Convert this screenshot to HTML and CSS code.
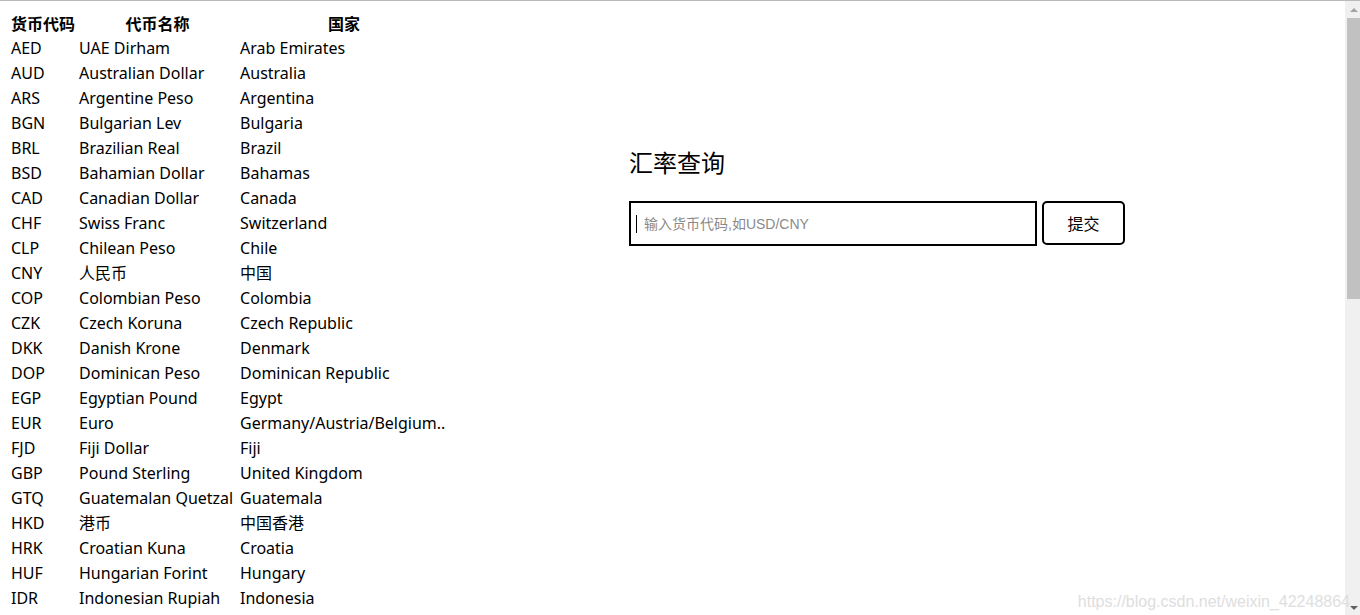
FILE: index.html
```html
<!DOCTYPE html>
<html lang="zh-CN">
<head>
<meta charset="utf-8">
<title>汇率查询</title>
<link rel="stylesheet" href="styles.css">
</head>
<body>
<div class="frame">
  <div class="page">
    <div class="list">
      <table class="rates">
        <thead>
          <tr><th class="c1">货币代码</th><th class="c2">代币名称</th><th class="c3">国家</th></tr>
        </thead>
        <tbody>
          <tr><td>AED</td><td>UAE Dirham</td><td>Arab Emirates</td></tr>
          <tr><td>AUD</td><td>Australian Dollar</td><td>Australia</td></tr>
          <tr><td>ARS</td><td>Argentine Peso</td><td>Argentina</td></tr>
          <tr><td>BGN</td><td>Bulgarian Lev</td><td>Bulgaria</td></tr>
          <tr><td>BRL</td><td>Brazilian Real</td><td>Brazil</td></tr>
          <tr><td>BSD</td><td>Bahamian Dollar</td><td>Bahamas</td></tr>
          <tr><td>CAD</td><td>Canadian Dollar</td><td>Canada</td></tr>
          <tr><td>CHF</td><td>Swiss Franc</td><td>Switzerland</td></tr>
          <tr><td>CLP</td><td>Chilean Peso</td><td>Chile</td></tr>
          <tr><td>CNY</td><td>人民币</td><td>中国</td></tr>
          <tr><td>COP</td><td>Colombian Peso</td><td>Colombia</td></tr>
          <tr><td>CZK</td><td>Czech Koruna</td><td>Czech Republic</td></tr>
          <tr><td>DKK</td><td>Danish Krone</td><td>Denmark</td></tr>
          <tr><td>DOP</td><td>Dominican Peso</td><td>Dominican Republic</td></tr>
          <tr><td>EGP</td><td>Egyptian Pound</td><td>Egypt</td></tr>
          <tr><td>EUR</td><td>Euro</td><td>Germany/Austria/Belgium..</td></tr>
          <tr><td>FJD</td><td>Fiji Dollar</td><td>Fiji</td></tr>
          <tr><td>GBP</td><td>Pound Sterling</td><td>United Kingdom</td></tr>
          <tr><td>GTQ</td><td>Guatemalan Quetzal</td><td>Guatemala</td></tr>
          <tr><td>HKD</td><td>港币</td><td>中国香港</td></tr>
          <tr><td>HRK</td><td>Croatian Kuna</td><td>Croatia</td></tr>
          <tr><td>HUF</td><td>Hungarian Forint</td><td>Hungary</td></tr>
          <tr><td>IDR</td><td>Indonesian Rupiah</td><td>Indonesia</td></tr>
        </tbody>
      </table>
    </div>
    <div class="query">
      <h2 class="title">汇率查询</h2>
      <form class="form">
        <div class="field">
          <input class="input" type="text" placeholder="输入货币代码,如USD/CNY">
          <span class="caret"></span>
        </div>
        <button class="submit" type="button">提交</button>
      </form>
    </div>
  </div>
  <div class="scrollbar">
    <div class="arrow up"></div>
    <div class="thumb"></div>
    <div class="track"></div>
    <div class="arrow down"></div>
  </div>
  <div class="watermark">https://blog.csdn.net/weixin_42248864</div>
</div>
</body>
</html>
```
FILE: styles.css
```css
html, body {
  margin: 0;
  padding: 0;
  background: #fff;
}
body {
  border-top: 1px solid #b9b9b9;
  font-family: "Noto Sans", "Noto Sans CJK SC", sans-serif;
  color: #000;
}
.frame {
  position: relative;
  display: flex;
  height: 614px;
  overflow: hidden;
}
.page {
  flex: 1;
  display: flex;
  padding: 0 8px;
  overflow: hidden;
}
.list {
  width: 621px;
  flex: none;
}
.rates {
  border-spacing: 2px;
  margin-top: 8px;
  font-size: 16px;
  line-height: 21px;
}
.rates th, .rates td {
  padding: 1px;
  white-space: nowrap;
}
.rates th {
  font-weight: bold;
  text-align: center;
  font-family: "Noto Sans CJK SC", sans-serif;
  font-size: 16px;
  line-height: 22px;
}
.rates td {
  text-align: left;
}
.c1 { width: 64px; }
.c2 { width: 157px; }
.c3 { width: 208px; }
.query {
  padding-top: 145px;
}
.title {
  margin: 0 0 23px;
  font-family: "Noto Sans CJK SC", sans-serif;
  font-weight: normal;
  font-size: 24px;
  line-height: 32px;
}
.form {
  display: flex;
  gap: 5px;
}
.field {
  position: relative;
}
.input {
  box-sizing: border-box;
  width: 408px;
  height: 45px;
  border: 2px solid #000;
  border-radius: 0;
  padding: 0 0 0 13px;
  margin: 0;
  font-family: "Liberation Sans", "Noto Sans CJK SC", sans-serif;
  font-size: 14px;
  outline: none;
}
.input::placeholder {
  color: #8a8a8a;
}
.caret {
  position: absolute;
  left: 7px;
  top: 14px;
  width: 1px;
  height: 18px;
  background: #000;
}
.submit {
  box-sizing: border-box;
  width: 83px;
  height: 44px;
  border: 2px solid #000;
  border-radius: 5px;
  background: #fff;
  font-family: "Noto Sans CJK SC", sans-serif;
  font-size: 16px;
  color: #000;
  padding: 0;
  margin: 0;
}
.scrollbar {
  width: 15px;
  flex: none;
  background: #f0f0f0;
  display: flex;
  flex-direction: column;
  align-items: flex-end;
}
.arrow {
  width: 13px;
  height: 17px;
  flex: none;
  position: relative;
}
.arrow.up::after {
  content: "";
  position: absolute;
  left: 3px;
  top: 7px;
  border-left: 4px solid transparent;
  border-right: 4px solid transparent;
  border-bottom: 4px solid #a3a3a3;
}
.arrow.down::after {
  content: "";
  position: absolute;
  left: 3px;
  top: 8px;
  border-left: 4px solid transparent;
  border-right: 4px solid transparent;
  border-top: 4px solid #606060;
}
.thumb {
  width: 13px;
  height: 281px;
  background: #c1c1c1;
  flex: none;
}
.track {
  flex: 1;
}
.watermark {
  position: absolute;
  right: 10px;
  bottom: 4px;
  font-family: "Liberation Sans", sans-serif;
  font-size: 16px;
  color: #dedede;
  white-space: nowrap;
}
```
